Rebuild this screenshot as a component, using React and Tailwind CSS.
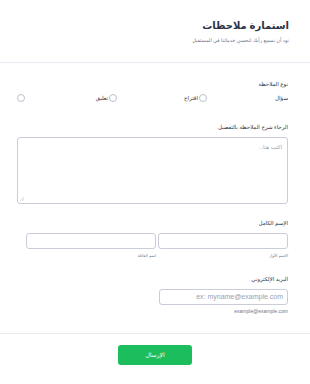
import React from 'react';

const font = { fontFamily: '"Liberation Sans", "DejaVu Sans", sans-serif' };

const Radio = () => (
  <span className="block w-[8px] h-[8px] rounded-full border border-[#b9bfcc] bg-white shrink-0" />
);

export default function App() {
  return (
    <div dir="rtl" className="w-[310px] h-[384px] bg-white text-[#2c3345] overflow-hidden font-['Liberation_Sans','DejaVu_Sans',sans-serif]">
      {/* header */}
      <div className="pr-[21px] pl-[17px] pt-[18px] pb-[18px] border-b border-[#e8eaf1]">
        <h1 className="text-[10px] leading-[16px] font-bold text-[#2c3345]">استمارة ملاحظات</h1>
        <p className="mt-[2px] text-[5px] leading-[8px] text-[#6f768a]">نود أن نسمع رأيك لنحسن خدماتنا في المستقبل</p>
      </div>

      <div className="pr-[22px] pl-[17px]">
        {/* feedback type */}
        <div className="mt-[17px] text-[5.5px] leading-[8px]">نوع الملاحظة</div>
        <div className="mt-[6px] h-[8px] flex items-center text-[5.5px] leading-[8px] text-[#2c3345]">
          <div className="w-[81px] flex items-center">سؤال</div>
          <div className="w-[90px] flex items-center gap-[1px]"><Radio /><span>اقتراح</span></div>
          <div className="w-[92px] flex items-center gap-[1px]"><Radio /><span>تعليق</span></div>
          <div className="flex items-center"><Radio /></div>
        </div>

        {/* details */}
        <div className="mt-[21px] text-[5.5px] leading-[8px]">الرجاء شرح الملاحظة بالتفصيل</div>
        <div className="mt-[6px] relative w-[271px] h-[67px] border border-[#c9cdd7] rounded-[3px]">
          <span className="absolute right-[5px] top-[5px] text-[5.5px] leading-[8px] text-[#9aa0b0]">اكتب هنا...</span>
          <svg className="absolute left-[2px] bottom-[2px]" width="4" height="4" viewBox="0 0 4 4">
            <path d="M0 4L4 0M2 4L4 2" stroke="#b9bfcc" strokeWidth="0.6" />
          </svg>
        </div>

        {/* full name */}
        <div className="mt-[15px] text-[5.5px] leading-[8px]">الإسم الكامل</div>
        <div className="mt-[6px] flex gap-[2px]">
          <div className="w-[130px]">
            <div className="h-[16px] border border-[#c9cdd7] rounded-[3px]" />
            <div className="mt-[4px] text-[4px] leading-[6px] text-[#6f768a]">الاسم الأول</div>
          </div>
          <div className="w-[130px]">
            <div className="h-[16px] border border-[#c9cdd7] rounded-[3px]" />
            <div className="mt-[4px] text-[4px] leading-[6px] text-[#6f768a]">اسم العائلة</div>
          </div>
        </div>

        {/* email */}
        <div className="mt-[16px] text-[5.5px] leading-[8px]">البريد الإلكتروني</div>
        <div className="mt-[6px] w-[129px] h-[16px] border border-[#c9cdd7] rounded-[3px] flex items-center px-[4px]">
          <span dir="ltr" className="text-[7px] leading-[10px] text-[#9aa0b0]" style={font}>ex: myname@example.com</span>
        </div>
        <div className="mt-[2px] text-[5px] leading-[8px] text-[#6f768a]" style={font}>example@example.com</div>
      </div>

      {/* submit */}
      <div className="mt-[18px] border-t border-[#e8eaf1] flex justify-center pt-[11px]">
        <button className="w-[74px] h-[20px] rounded-[3px] bg-[#1bbd5c] text-white text-[6px] leading-[8px]">الإرسال</button>
      </div>
    </div>
  );
}
